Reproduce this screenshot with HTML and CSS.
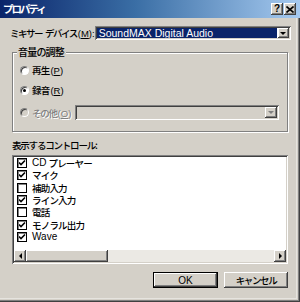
FILE: index.html
```html
<!DOCTYPE html>
<html lang="ja">

<head>
    <meta charset="UTF-8">
    <meta name="viewport" content="width=device-width, initial-scale=1.0">
    <title>プロパティ</title>
    <link rel="stylesheet" href="styles.css">
</head>

<body>
    <div class="window">
        <div class="titlebar">
            <span class="title">プロパティ</span>
            <div class="caption-buttons">
                <span class="caption-btn help">?</span>
                <span class="caption-btn close">
                    <svg width="8" height="7" viewBox="0 0 8 7"><path d="M0.5 0.5 L7.5 6.5 M7.5 0.5 L0.5 6.5" stroke="#000" stroke-width="1.6" /></svg>
                </span>
            </div>
        </div>

        <div class="content">
            <div class="device-row">
                <span class="label">ミキサー<span class="gap"></span>デバイス<span class="key">(<u>M</u>):</span></span>
                <div class="combo">
                    <span class="combo-value selected">SoundMAX Digital Audio</span>
                    <span class="drop-btn"><i class="arrow-down"></i></span>
                </div>
            </div>

            <div class="group">
                <span class="group-title">音量の調整</span>
                <div class="radio-row">
                    <span class="radio"></span>
                    <span>再生<span class="key">(<u>P</u>)</span></span>
                </div>
                <div class="radio-row">
                    <span class="radio checked"></span>
                    <span>録音<span class="key">(<u>R</u>)</span></span>
                </div>
                <div class="radio-row disabled">
                    <span class="radio"></span>
                    <span class="other-label">その他<span class="key">(<u>O</u>)</span></span>
                    <div class="combo small">
                        <span class="combo-value"></span>
                        <span class="drop-btn"><i class="arrow-down"></i></span>
                    </div>
                </div>
            </div>

            <div class="list-label">表示するコントロール:</div>
            <div class="listbox">
                <div class="item"><span class="check on"></span><span class="latin">CD</span><span class="gap small"></span>プレーヤー</div>
                <div class="item"><span class="check on"></span>マイク</div>
                <div class="item"><span class="check"></span>補助入力</div>
                <div class="item"><span class="check on"></span>ライン入力</div>
                <div class="item"><span class="check"></span>電話</div>
                <div class="item"><span class="check on"></span>モノラル出力</div>
                <div class="item"><span class="check on"></span><span class="latin">Wave</span></div>
                <div class="hscroll">
                    <span class="sb-btn"><i class="arrow-left"></i></span>
                    <span class="sb-thumb"></span>
                    <span class="sb-track"></span>
                    <span class="sb-btn"><i class="arrow-right"></i></span>
                </div>
            </div>

            <div class="actions">
                <button type="button" class="btn default"><span class="latin">OK</span></button>
                <button type="button" class="btn">キャンセル</button>
            </div>
        </div>
    </div>
</body>

</html>
```

FILE: styles.css
```css
* {
    box-sizing: border-box;
}

body {
    margin: 0;
    padding: 0;
    width: 300px;
    height: 302px;
    overflow: hidden;
    background-color: #d4d0c8;
    font-family: "Noto Sans CJK JP", "DejaVu Sans", sans-serif;
    font-size: 9.5px;
    font-weight: 500;
    letter-spacing: -0.8px;
    color: #000;
}

u {
    text-decoration: underline;
    text-underline-offset: 1px;
}

.latin {
    font-family: "Liberation Sans", sans-serif;
    font-size: 10px;
    font-weight: normal;
    letter-spacing: 0;
}

.key {
    font-family: "Liberation Sans", sans-serif;
    font-size: 9.5px;
    font-weight: normal;
    letter-spacing: 0;
    margin-left: 1px;
}

.gap {
    display: inline-block;
    width: 3px;
}

.gap.small {
    width: 2px;
}

.window {
    width: 300px;
    height: 302px;
    display: flex;
    flex-direction: column;
    background-color: #d4d0c8;
    box-shadow: inset -1px -1px 0 #404040, inset -2px -2px 0 #808080, inset -3px -3px 0 #d4d0c8, inset -4px -4px 0 #e6e4df;
}

/* title bar */
.titlebar {
    height: 18px;
    flex: none;
    display: flex;
    align-items: center;
    justify-content: space-between;
    padding: 0 4px 0 3px;
    background: linear-gradient(to right, #0a246a 0%, #3a6ea5 45%, #a6caf0 100%);
}

.title {
    color: #fff;
    font-weight: bold;
    font-size: 10.5px;
    letter-spacing: -2px;
    line-height: 18px;
}

.caption-buttons {
    display: flex;
    gap: 1px;
}

.caption-btn {
    width: 12px;
    height: 12px;
    display: flex;
    align-items: center;
    justify-content: center;
    background-color: #d4d0c8;
    box-shadow: inset -1px -1px 0 #404040, inset 1px 1px 0 #fff, inset -2px -2px 0 #808080;
    font-family: "Liberation Sans", sans-serif;
    font-weight: bold;
    font-size: 10px;
    letter-spacing: 0;
    line-height: 12px;
}

/* main area */
.content {
    flex: 1;
    display: flex;
    flex-direction: column;
    padding: 8px 12px 0 12px;
}

.device-row {
    display: flex;
    align-items: center;
    justify-content: space-between;
    height: 14px;
    margin-left: -2px;
    margin-right: -1px;
}

.label {
    line-height: 14px;
    letter-spacing: -1.5px;
    white-space: nowrap;
}

.combo {
    width: 196px;
    height: 14px;
    flex: none;
    display: flex;
    padding: 2px;
    background-color: #fff;
    box-shadow: inset 1px 1px 0 #808080, inset -1px -1px 0 #fff, inset 2px 2px 0 #404040, inset -2px -2px 0 #d4d0c8;
}

.combo-value {
    flex: 1;
    font-family: "Liberation Sans", sans-serif;
    font-size: 10.5px;
    font-weight: normal;
    letter-spacing: 0;
    line-height: 10px;
    padding-left: 2px;
    white-space: nowrap;
    overflow: hidden;
}

.combo-value.selected {
    background-color: #0a246a;
    color: #fff;
    margin: 0 1px 0 0;
}

.drop-btn {
    width: 11px;
    flex: none;
    display: flex;
    align-items: center;
    justify-content: center;
    background-color: #d4d0c8;
    box-shadow: inset -1px -1px 0 #404040, inset 1px 1px 0 #fff, inset -2px -2px 0 #808080;
}

.arrow-down {
    width: 0;
    height: 0;
    border-left: 3px solid transparent;
    border-right: 3px solid transparent;
    border-top: 3px solid #000;
}

/* volume group */
.group {
    position: relative;
    margin-top: 12px;
    height: 80px;
    flex: none;
    padding: 10px 9px 0 7px;
    border: 1px solid #808080;
    box-shadow: inset 1px 1px 0 #fff, 1px 1px 0 #fff;
}

.group-title {
    position: absolute;
    top: -8px;
    left: 4px;
    padding: 0 2px 0 1px;
    font-size: 10px;
    line-height: 14px;
    background-color: #d4d0c8;
}

.radio-row {
    display: flex;
    align-items: center;
    height: 14px;
    margin-bottom: 6px;
    white-space: nowrap;
}

.radio-row:nth-child(3) {
    margin-bottom: 8px;
}

.radio-row.disabled {
    height: 15px;
    color: #808080;
    text-shadow: 1px 1px 0 #fff;
}

.radio {
    width: 9px;
    height: 9px;
    flex: none;
    margin-right: 3px;
    border-radius: 50%;
    background-color: #fff;
    border: 1px solid;
    border-color: #808080 #fff #fff #808080;
    box-shadow: inset 1px 1px 0 #404040;
    display: flex;
    align-items: center;
    justify-content: center;
}

.radio.checked::after {
    content: "";
    width: 3px;
    height: 3px;
    border-radius: 50%;
    background-color: #000;
}

.radio-row.disabled .radio {
    background-color: #d4d0c8;
}

.other-label {
    width: 43px;
    flex: none;
    letter-spacing: -1.3px;
}

.combo.small {
    width: 204px;
    height: 15px;
    margin-left: auto;
    background-color: #d4d0c8;
}

.combo.small .drop-btn {
    width: 12px;
}

.combo.small .arrow-down {
    border-top-color: #808080;
}

/* control list */
.list-label {
    margin-top: 7px;
    line-height: 13px;
    letter-spacing: -1.2px;
    white-space: nowrap;
}

.listbox {
    margin-top: 3px;
    height: 109px;
    flex: none;
    display: flex;
    flex-direction: column;
    padding: 2px;
    background-color: #fff;
    box-shadow: inset 1px 1px 0 #808080, inset -1px -1px 0 #fff, inset 2px 2px 0 #404040, inset -2px -2px 0 #d4d0c8;
}

.item {
    height: 12.3px;
    flex: none;
    display: flex;
    align-items: center;
    padding-left: 3px;
    line-height: 12px;
    white-space: nowrap;
}

.check {
    width: 10px;
    height: 10px;
    margin-right: 5px;
    border: 1px solid #000;
    box-shadow: inset 1px 1px 0 #808080;
    background-color: #fff;
    flex: none;
}

.check.on {
    background: #fff url("data:image/svg+xml,%3Csvg xmlns='http://www.w3.org/2000/svg' width='8' height='8' viewBox='0 0 8 8'%3E%3Cpath d='M1 3.5 L3 5.5 L7 1.5' fill='none' stroke='%23000' stroke-width='1.6'/%3E%3C/svg%3E") center / 8px 8px no-repeat;
}

.hscroll {
    margin-top: auto;
    height: 12px;
    flex: none;
    display: flex;
}

.sb-btn {
    width: 12px;
    flex: none;
    display: flex;
    align-items: center;
    justify-content: center;
    background-color: #d4d0c8;
    box-shadow: inset -1px -1px 0 #404040, inset 1px 1px 0 #fff, inset -2px -2px 0 #808080;
}

.sb-thumb {
    width: 82px;
    flex: none;
    background-color: #d4d0c8;
    box-shadow: inset -1px -1px 0 #404040, inset 1px 1px 0 #fff, inset -2px -2px 0 #808080;
}

.sb-track {
    flex: 1;
    background-color: #ebe9e4;
}

.arrow-left {
    width: 0;
    height: 0;
    border-top: 3px solid transparent;
    border-bottom: 3px solid transparent;
    border-right: 3px solid #000;
}

.arrow-right {
    width: 0;
    height: 0;
    border-top: 3px solid transparent;
    border-bottom: 3px solid transparent;
    border-left: 3px solid #000;
}

/* dialog buttons */
.actions {
    margin-top: 8px;
    display: flex;
    justify-content: flex-end;
    gap: 6px;
}

.btn {
    width: 64px;
    height: 16px;
    padding: 0;
    border: none;
    font-family: "Noto Sans CJK JP", "Liberation Sans", sans-serif;
    font-size: 9.5px;
    font-weight: 500;
    letter-spacing: -1.4px;
    line-height: 14px;
    color: #000;
    background-color: #d4d0c8;
    box-shadow: inset -1px -1px 0 #404040, inset 1px 1px 0 #fff, inset -2px -2px 0 #808080;
}

.btn.default {
    width: 65px;
    border: 1px solid #000;
}
```
